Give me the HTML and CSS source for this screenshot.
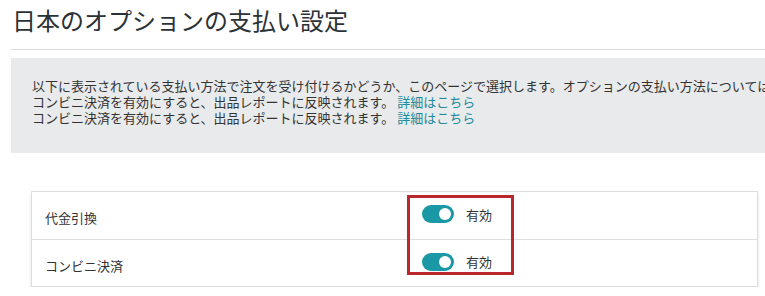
FILE: index.html
```html
<!DOCTYPE html>
<html lang="ja">
<head>
  <meta charset="UTF-8" />
  <title>日本のオプションの支払い設定</title>
  <link rel="stylesheet" href="styles.css">
</head>
<body>
  <h1 class="page-title">日本のオプションの支払い設定</h1>

  <div class="notice">
    <p>以下に表示されている支払い方法で注文を受け付けるかどうか、このページで選択します。オプションの支払い方法については</p>
    <p>コンビニ決済を有効にすると、出品レポートに反映されます。 <a href="#">詳細はこちら</a></p>
    <p>コンビニ決済を有効にすると、出品レポートに反映されます。 <a href="#">詳細はこちら</a></p>
  </div>

  <div class="methods">
    <div class="row">
      <div class="label">代金引換</div>
      <div class="status">
        <span class="toggle on"><span class="knob"></span></span>
        <span>有効</span>
      </div>
    </div>
    <div class="row">
      <div class="label">コンビニ決済</div>
      <div class="status">
        <span class="toggle on"><span class="knob"></span></span>
        <span>有効</span>
      </div>
    </div>
    <div class="highlight-box"></div>
  </div>
</body>
</html>
```

FILE: styles.css
```css
* {
  box-sizing: border-box;
}

body {
  margin: 0;
  padding-left: 11px;
  font-family: "Noto Sans CJK JP", "Noto Sans", sans-serif;
  color: #333;
  background: #fff;
  overflow: hidden;
}

.page-title {
  margin: 0;
  padding: 4px 0 13px 1px;
  font-size: 24px;
  line-height: 32px;
  font-weight: normal;
  color: #2b3236;
  border-bottom: 1px solid #dcdcdc;
}

.notice {
  margin-top: 8px;
  height: 95px;
  padding: 20px 0 0 21px;
  background: #e8eaeb;
  white-space: nowrap;
  overflow: hidden;
}

.notice p {
  margin: 0;
  font-size: 13px;
  line-height: 16px;
}

.notice a {
  color: #1a8c9d;
  text-decoration: none;
}

.methods {
  position: relative;
  margin: 38px 0 0 20px;
  width: 727px;
  border: 1px solid #dedede;
  box-shadow: 0 2px 3px rgba(0, 0, 0, 0.12);
  background: #fff;
}

.row {
  display: grid;
  grid-template-columns: 377px 1fr;
  align-items: center;
  height: 47px;
  padding-left: 13px;
  font-size: 13px;
}

.row + .row {
  border-top: 1px solid #dedede;
}

.label {
  padding-top: 4px;
}

.status {
  display: flex;
  align-items: center;
  gap: 12px;
  margin-top: -3px;
}

.toggle {
  display: flex;
  align-items: center;
  justify-content: flex-end;
  width: 32px;
  height: 18px;
  padding: 0 3px;
  border-radius: 9px;
  background: #1a98a6;
}

.knob {
  width: 12px;
  height: 12px;
  border-radius: 50%;
  background: #fff;
}

.highlight-box {
  position: absolute;
  left: 375px;
  top: 3px;
  width: 107px;
  height: 80px;
  border: 3px solid #b9262b;
}
```
